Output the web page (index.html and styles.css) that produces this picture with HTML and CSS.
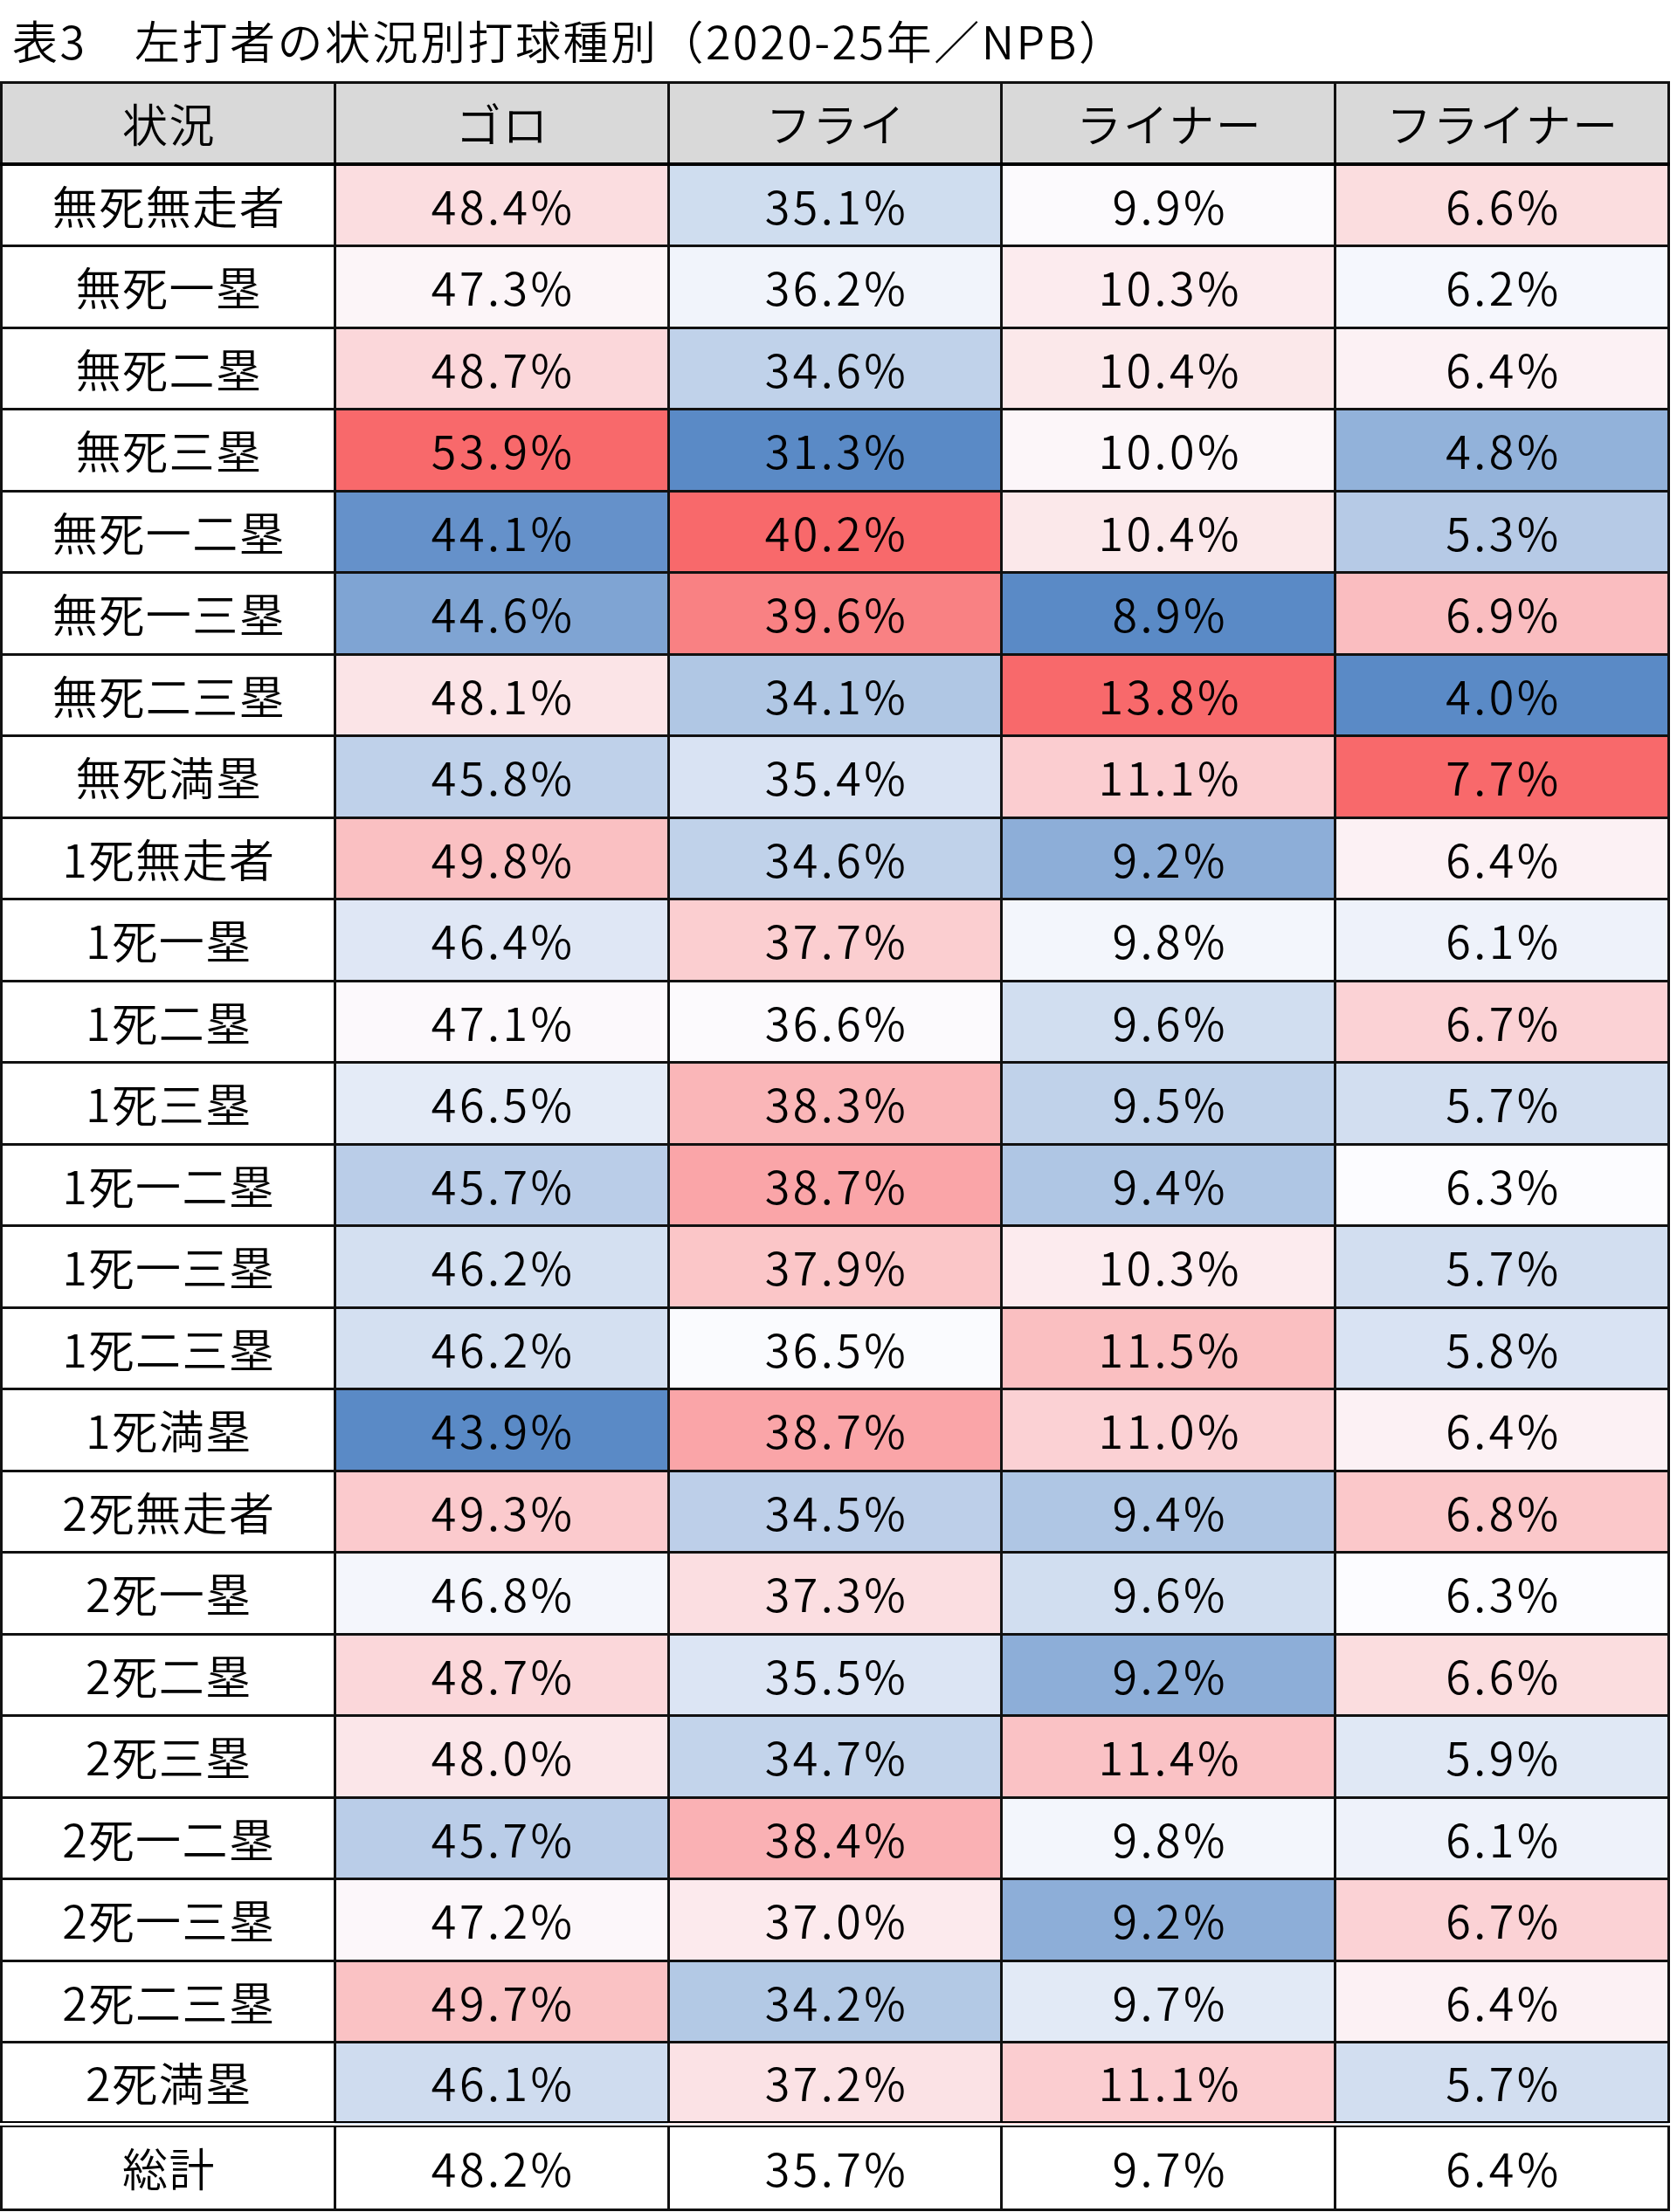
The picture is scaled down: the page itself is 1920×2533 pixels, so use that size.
FILE: index.html
```html
<!DOCTYPE html>
<html lang="ja">
<head>
<meta charset="utf-8">
<title>表3 左打者の状況別打球種別</title>
<link rel="stylesheet" href="styles.css">
</head>
<body>
<div class="page">
  <h1 class="title">表3　左打者の状況別打球種別（2020-25年／NPB）</h1>
  <table class="grid">
    <colgroup><col><col><col><col><col></colgroup>
    <thead>
      <tr><th>状況</th><th>ゴロ</th><th>フライ</th><th>ライナー</th><th>フライナー</th></tr>
    </thead>
    <tbody>
      <tr class="data"><td>無死無走者</td><td>48.4%</td><td>35.1%</td><td>9.9%</td><td>6.6%</td></tr>
      <tr class="data"><td>無死一塁</td><td>47.3%</td><td>36.2%</td><td>10.3%</td><td>6.2%</td></tr>
      <tr class="data"><td>無死二塁</td><td>48.7%</td><td>34.6%</td><td>10.4%</td><td>6.4%</td></tr>
      <tr class="data"><td>無死三塁</td><td>53.9%</td><td>31.3%</td><td>10.0%</td><td>4.8%</td></tr>
      <tr class="data"><td>無死一二塁</td><td>44.1%</td><td>40.2%</td><td>10.4%</td><td>5.3%</td></tr>
      <tr class="data"><td>無死一三塁</td><td>44.6%</td><td>39.6%</td><td>8.9%</td><td>6.9%</td></tr>
      <tr class="data"><td>無死二三塁</td><td>48.1%</td><td>34.1%</td><td>13.8%</td><td>4.0%</td></tr>
      <tr class="data"><td>無死満塁</td><td>45.8%</td><td>35.4%</td><td>11.1%</td><td>7.7%</td></tr>
      <tr class="data"><td>1死無走者</td><td>49.8%</td><td>34.6%</td><td>9.2%</td><td>6.4%</td></tr>
      <tr class="data"><td>1死一塁</td><td>46.4%</td><td>37.7%</td><td>9.8%</td><td>6.1%</td></tr>
      <tr class="data"><td>1死二塁</td><td>47.1%</td><td>36.6%</td><td>9.6%</td><td>6.7%</td></tr>
      <tr class="data"><td>1死三塁</td><td>46.5%</td><td>38.3%</td><td>9.5%</td><td>5.7%</td></tr>
      <tr class="data"><td>1死一二塁</td><td>45.7%</td><td>38.7%</td><td>9.4%</td><td>6.3%</td></tr>
      <tr class="data"><td>1死一三塁</td><td>46.2%</td><td>37.9%</td><td>10.3%</td><td>5.7%</td></tr>
      <tr class="data"><td>1死二三塁</td><td>46.2%</td><td>36.5%</td><td>11.5%</td><td>5.8%</td></tr>
      <tr class="data"><td>1死満塁</td><td>43.9%</td><td>38.7%</td><td>11.0%</td><td>6.4%</td></tr>
      <tr class="data"><td>2死無走者</td><td>49.3%</td><td>34.5%</td><td>9.4%</td><td>6.8%</td></tr>
      <tr class="data"><td>2死一塁</td><td>46.8%</td><td>37.3%</td><td>9.6%</td><td>6.3%</td></tr>
      <tr class="data"><td>2死二塁</td><td>48.7%</td><td>35.5%</td><td>9.2%</td><td>6.6%</td></tr>
      <tr class="data"><td>2死三塁</td><td>48.0%</td><td>34.7%</td><td>11.4%</td><td>5.9%</td></tr>
      <tr class="data"><td>2死一二塁</td><td>45.7%</td><td>38.4%</td><td>9.8%</td><td>6.1%</td></tr>
      <tr class="data"><td>2死一三塁</td><td>47.2%</td><td>37.0%</td><td>9.2%</td><td>6.7%</td></tr>
      <tr class="data"><td>2死二三塁</td><td>49.7%</td><td>34.2%</td><td>9.7%</td><td>6.4%</td></tr>
      <tr class="data"><td>2死満塁</td><td>46.1%</td><td>37.2%</td><td>11.1%</td><td>5.7%</td></tr>
    </tbody>
    <tfoot>
      <tr class="total"><td>総計</td><td>48.2%</td><td>35.7%</td><td>9.7%</td><td>6.4%</td></tr>
    </tfoot>
  </table>
</div>
<script src="script.js"></script>
</body>
</html>
```

FILE: styles.css
```css
html, body {
  margin: 0;
  padding: 0;
  background: #ffffff;
}

.page {
  width: 1920px;
  font-family: "Noto Sans CJK JP", "Noto Sans", sans-serif;
  color: #000000;
}

.title {
  margin: 0;
  padding-left: 14px;
  height: 93px;
  line-height: 92px;
  font-size: 52px;
  font-weight: 350;
  white-space: nowrap;
  letter-spacing: 2.5px;
}

.grid {
  width: 1912px;
  border-collapse: collapse;
  table-layout: fixed;
  border: 3px solid #1a1a1a;
}

.grid col {
  width: 20%;
}

.grid th,
.grid td {
  border: 3px solid #111111;
  text-align: center;
  vertical-align: middle;
  padding: 0 0 0 2px;
  font-size: 52px;
  font-weight: 350;
  line-height: 1;
  letter-spacing: 1.5px;
}

.grid td + td {
  letter-spacing: 3.5px;
  padding-left: 4px;
}

.grid thead tr {
  height: 93.5px;
}

.grid thead th {
  background: #d9d9d9;
  border-bottom: 4px solid #000000;
}

.grid tbody tr {
  height: 93.5px;
}

.grid td {
  background: #ffffff;
}

.grid tfoot tr {
  height: 98px;
}

.grid tfoot td {
  border-top: 7px double #000000;
}
```

FILE: script.js
```js
(function () {
  var RED = [248, 105, 107];
  var MID = [252, 252, 255];
  var BLUE = [90, 138, 198];
  var rows = Array.prototype.slice.call(document.querySelectorAll('tbody tr.data'));
  for (var c = 1; c <= 4; c++) {
    var cells = rows.map(function (r) { return r.children[c]; });
    var vals = cells.map(function (td) { return parseFloat(td.textContent); });
    var s = vals.slice().sort(function (a, b) { return a - b; });
    var n = s.length, min = s[0], max = s[n - 1];
    var k = (n - 1) * 0.5, f = Math.floor(k), cc = Math.ceil(k);
    var med = s[f] + (s[cc] - s[f]) * (k - f);
    cells.forEach(function (td, i) {
      var v = vals[i], col;
      if (v >= med) {
        var t = max === med ? 0 : (v - med) / (max - med);
        col = MID.map(function (m, j) { return Math.round(m + (RED[j] - m) * t); });
      } else {
        var t2 = (med - v) / (med - min);
        col = MID.map(function (m, j) { return Math.round(m + (BLUE[j] - m) * t2); });
      }
      td.style.backgroundColor = 'rgb(' + col.join(',') + ')';
    });
  }
})();
```
